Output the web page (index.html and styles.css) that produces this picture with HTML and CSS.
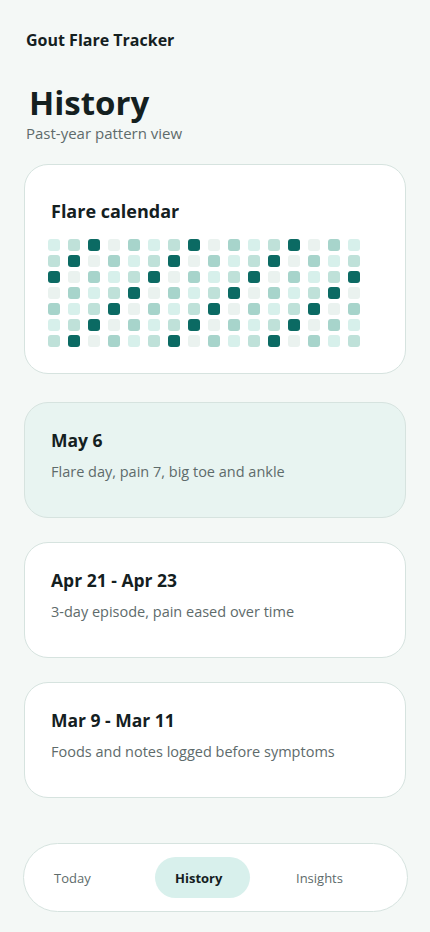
FILE: index.html
```html
<!DOCTYPE html>
<html lang="en">
<head>
<meta charset="utf-8">
<meta name="viewport" content="width=device-width, initial-scale=1">
<title>Gout Flare Tracker</title>
<link rel="stylesheet" href="styles.css">
</head>
<body>
<div class="page">
  <header class="top">
    <div class="brand">Gout Flare Tracker</div>
    <h1 class="title">History</h1>
    <p class="lead">Past-year pattern view</p>
  </header>

  <section class="card calendar">
    <h2 class="cal-title">Flare calendar</h2>
    <div class="grid">
      <span class="c c1"></span><span class="c c2"></span><span class="c c4"></span><span class="c c0"></span><span class="c c3"></span><span class="c c1"></span><span class="c c2"></span><span class="c c4"></span><span class="c c0"></span><span class="c c3"></span><span class="c c1"></span><span class="c c2"></span><span class="c c4"></span><span class="c c0"></span><span class="c c3"></span><span class="c c1"></span>
      <span class="c c2"></span><span class="c c4"></span><span class="c c0"></span><span class="c c3"></span><span class="c c1"></span><span class="c c2"></span><span class="c c4"></span><span class="c c0"></span><span class="c c3"></span><span class="c c1"></span><span class="c c2"></span><span class="c c4"></span><span class="c c0"></span><span class="c c3"></span><span class="c c1"></span><span class="c c2"></span>
      <span class="c c4"></span><span class="c c0"></span><span class="c c3"></span><span class="c c1"></span><span class="c c2"></span><span class="c c4"></span><span class="c c0"></span><span class="c c3"></span><span class="c c1"></span><span class="c c2"></span><span class="c c4"></span><span class="c c0"></span><span class="c c3"></span><span class="c c1"></span><span class="c c2"></span><span class="c c4"></span>
      <span class="c c0"></span><span class="c c3"></span><span class="c c1"></span><span class="c c2"></span><span class="c c4"></span><span class="c c0"></span><span class="c c3"></span><span class="c c1"></span><span class="c c2"></span><span class="c c4"></span><span class="c c0"></span><span class="c c3"></span><span class="c c1"></span><span class="c c2"></span><span class="c c4"></span><span class="c c0"></span>
      <span class="c c3"></span><span class="c c1"></span><span class="c c2"></span><span class="c c4"></span><span class="c c0"></span><span class="c c3"></span><span class="c c1"></span><span class="c c2"></span><span class="c c4"></span><span class="c c0"></span><span class="c c3"></span><span class="c c1"></span><span class="c c2"></span><span class="c c4"></span><span class="c c0"></span><span class="c c3"></span>
      <span class="c c1"></span><span class="c c2"></span><span class="c c4"></span><span class="c c0"></span><span class="c c3"></span><span class="c c1"></span><span class="c c2"></span><span class="c c4"></span><span class="c c0"></span><span class="c c3"></span><span class="c c1"></span><span class="c c2"></span><span class="c c4"></span><span class="c c0"></span><span class="c c3"></span><span class="c c1"></span>
      <span class="c c2"></span><span class="c c4"></span><span class="c c0"></span><span class="c c3"></span><span class="c c1"></span><span class="c c2"></span><span class="c c4"></span><span class="c c0"></span><span class="c c3"></span><span class="c c1"></span><span class="c c2"></span><span class="c c4"></span><span class="c c0"></span><span class="c c3"></span><span class="c c1"></span><span class="c c2"></span>
    </div>
  </section>

  <section class="card entry active">
    <h3 class="entry-title">May 6</h3>
    <p class="entry-text">Flare day, pain 7, big toe and ankle</p>
  </section>

  <section class="card entry">
    <h3 class="entry-title">Apr 21 - Apr 23</h3>
    <p class="entry-text">3-day episode, pain eased over time</p>
  </section>

  <section class="card entry">
    <h3 class="entry-title">Mar 9 - Mar 11</h3>
    <p class="entry-text">Foods and notes logged before symptoms</p>
  </section>

  <nav class="tabs">
    <a class="tab">Today</a>
    <a class="tab current">History</a>
    <a class="tab">Insights</a>
  </nav>
</div>
</body>
</html>
```

FILE: styles.css
```css
* { box-sizing: border-box; }

html, body {
  margin: 0;
  padding: 0;
}

body {
  background: #f4f8f6;
  font-family: "Open Sans", "Noto Sans", "Liberation Sans", sans-serif;
  color: #14201f;
}

.page {
  padding: 30px 24px 20px;
}

.top {
  padding-left: 2px;
}

.brand {
  font-size: 16px;
  line-height: 20px;
  font-weight: 700;
  color: #14201f;
}

.title {
  margin: 34px 0 0 3px;
  font-size: 33px;
  line-height: 38px;
  font-weight: 700;
  color: #14201f;
}

.lead {
  margin: 1px 0 0;
  font-size: 15px;
  line-height: 20px;
  color: #5e6b6b;
}

.card {
  background: #ffffff;
  border: 1px solid #d6e3df;
  border-radius: 24px;
}

.calendar {
  margin-top: 21px;
  padding: 34px 24px 26px 23px;
}

.cal-title {
  margin: 0 0 16px 3px;
  font-size: 18px;
  line-height: 24px;
  font-weight: 700;
}

.grid {
  display: grid;
  grid-template-columns: repeat(16, 12px);
  grid-auto-rows: 12px;
  column-gap: 8px;
  row-gap: 4px;
}

.c {
  display: block;
  border-radius: 3px;
}
.c0 { background: #eaf2ef; }
.c1 { background: #d7f0eb; }
.c2 { background: #bfe1d9; }
.c3 { background: #a7d4cb; }
.c4 { background: #0b6a63; }

.entry {
  margin-top: 24px;
  padding: 25px 26px 35px;
}

.calendar + .entry {
  margin-top: 28px;
}

.entry.active {
  background: #e8f4f1;
}

.entry-title {
  margin: 0;
  font-size: 17.5px;
  line-height: 24px;
  font-weight: 700;
}

.entry-text {
  margin: 10px 0 0;
  font-size: 14.5px;
  line-height: 20px;
  color: #5e6b6b;
}

.tabs {
  margin: 45px -2px 0 -1px;
  height: 69px;
  display: flex;
  align-items: center;
  gap: 26px;
  padding: 0 10px;
  background: #ffffff;
  border: 1px solid #d6e3df;
  border-radius: 35px;
}

.tab {
  width: 95px;
  height: 41px;
  display: flex;
  align-items: center;
  padding-left: 20px;
  font-size: 13px;
  color: #5e6b6b;
  border-radius: 21px;
}

.tab.current {
  background: #d8f0ec;
  font-weight: 700;
  color: #14201f;
}
```
